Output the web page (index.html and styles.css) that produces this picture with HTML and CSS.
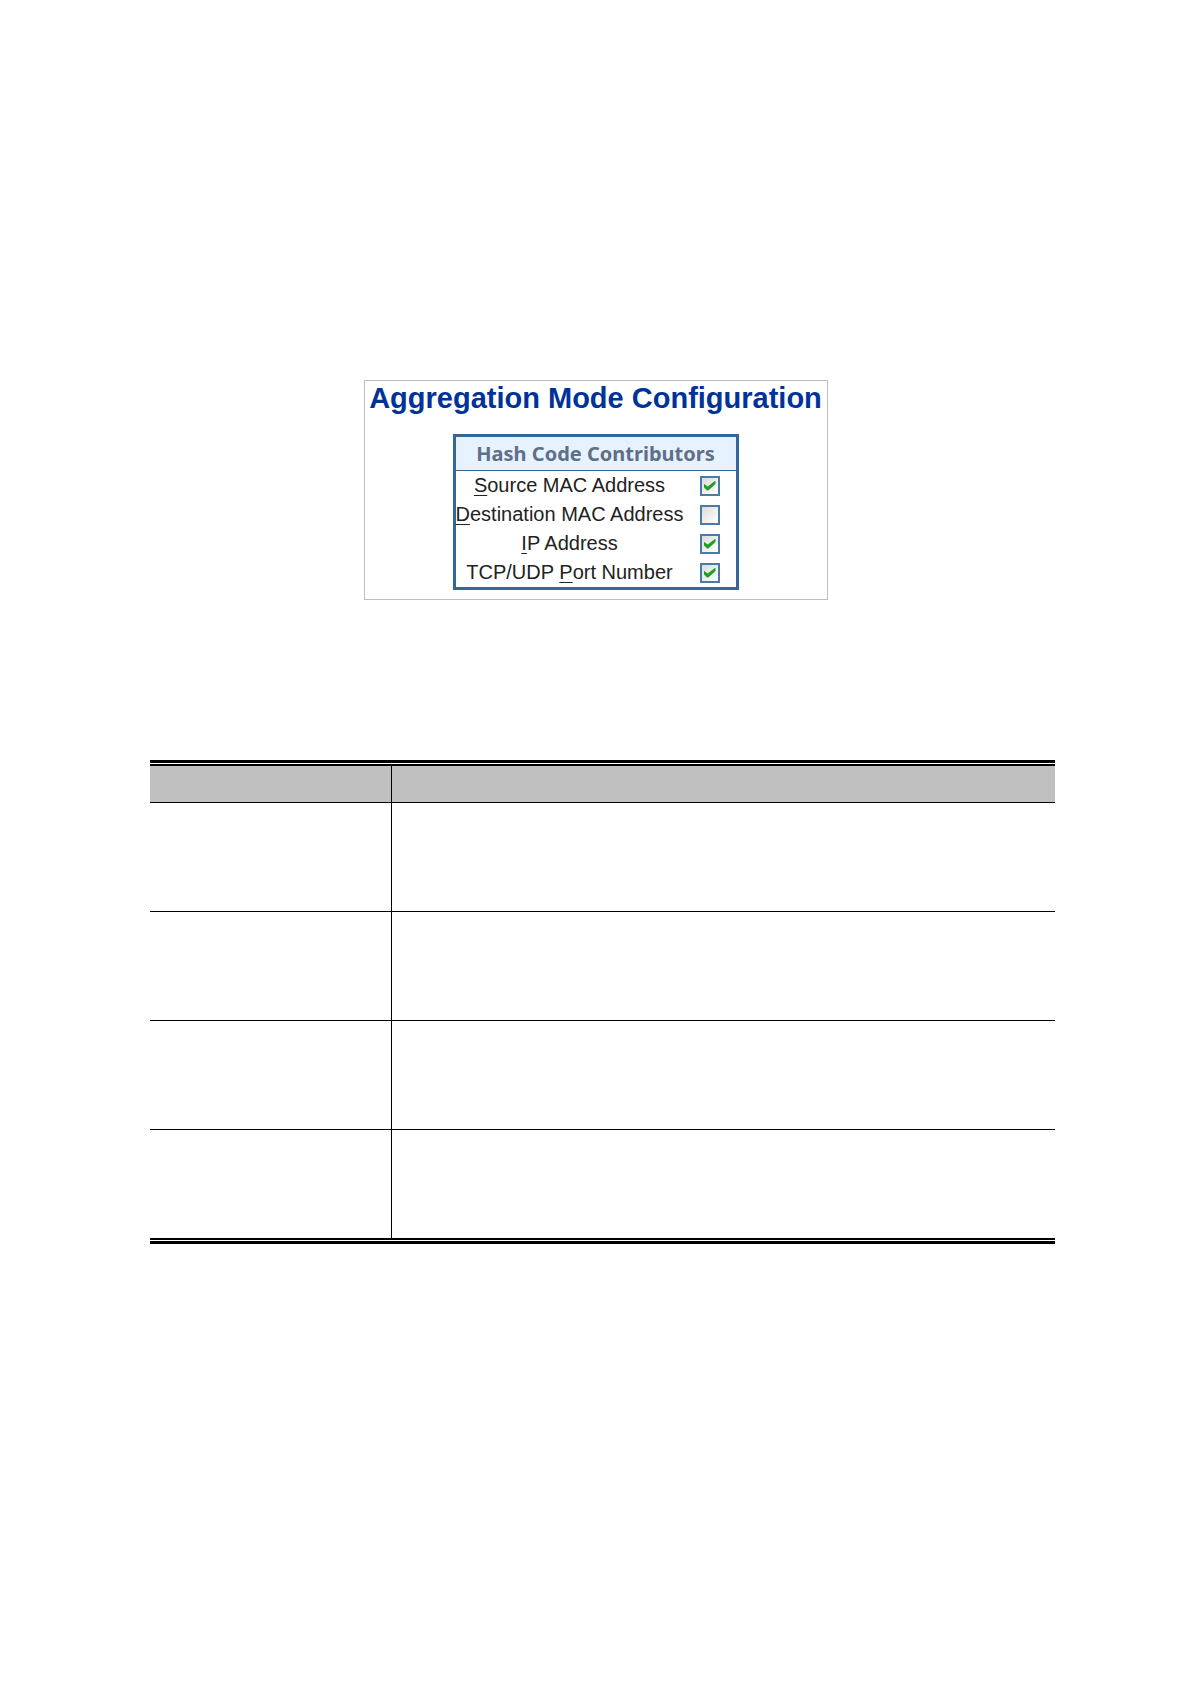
FILE: index.html
```
<!DOCTYPE html>
<html lang="en">
<head>
    <meta charset="UTF-8">
    <meta name="viewport" content="width=device-width, initial-scale=1.0">
    <title>Aggregation Mode Configuration</title>
    <link rel="stylesheet" href="styles.css">
</head>
<body>
    <form class="panel">
        <h1>Aggregation Mode Configuration</h1>
        <table class="hash">
            <thead>
                <tr><th colspan="2">Hash Code Contributors</th></tr>
            </thead>
            <tbody>
                <tr>
                    <td><label for="smac"><u>S</u>ource MAC Address</label></td>
                    <td class="check"><input type="checkbox" id="smac" checked></td>
                </tr>
                <tr>
                    <td><label for="dmac"><u>D</u>estination MAC Address</label></td>
                    <td class="check"><input type="checkbox" id="dmac"></td>
                </tr>
                <tr>
                    <td><label for="ip"><u>I</u>P Address</label></td>
                    <td class="check"><input type="checkbox" id="ip" checked></td>
                </tr>
                <tr>
                    <td><label for="port">TCP/UDP <u>P</u>ort Number</label></td>
                    <td class="check"><input type="checkbox" id="port" checked></td>
                </tr>
            </tbody>
        </table>
    </form>

    <div class="description">
        <table>
            <thead>
                <tr><th class="object"></th><th></th></tr>
            </thead>
            <tbody>
                <tr><td></td><td></td></tr>
                <tr><td></td><td></td></tr>
                <tr><td></td><td></td></tr>
                <tr><td></td><td></td></tr>
            </tbody>
        </table>
    </div>
</body>
</html>
```
FILE: styles.css
```
* {
    box-sizing: border-box;
}
body {
    margin: 0;
    padding: 380px 0 80px;
    background-color: #fff;
    font-family: "Liberation Sans", Arial, sans-serif;
}
.panel {
    width: 464px;
    max-width: 100%;
    margin: 0 auto;
    padding-bottom: 9px;
    border: 1px solid #bfbfbf;
}
h1 {
    margin: 0 0 18px;
    font-size: 29px;
    line-height: 35px;
    text-align: center;
    white-space: nowrap;
    color: #003399;
}
.hash {
    width: 286px;
    margin: 0 auto;
    border: 3px solid #336699;
    border-spacing: 0;
    font-size: 20px;
    line-height: 29px;
    text-align: center;
    white-space: nowrap;
    color: #222;
}
.hash th {
    height: 34px;
    padding: 0;
    border-bottom: 1px solid #336699;
    background-color: #e6f2ff;
    font-family: "Noto Sans", Tahoma, sans-serif;
    font-size: 20px;
    color: #5f6f86;
}
.hash td {
    height: 29px;
    padding: 0;
}
.hash .check {
    width: 52px;
    line-height: 0;
}
u {
    text-decoration-thickness: 1px;
    text-underline-offset: 3px;
}
input {
    appearance: none;
    width: 20px;
    height: 20px;
    margin: 0;
    padding: 3px 2px;
    border: 2px solid #4a7ba6;
    background: linear-gradient(135deg, #dcdcd7, #fff);
    vertical-align: middle;
}
/* green tick */
input:checked::before {
    content: "";
    display: block;
    width: 12px;
    height: 10px;
    background-color: #21a121;
    clip-path: polygon(0 30%, 35% 60%, 100% 0, 100% 35%, 40% 100%, 30% 100%, 0 65%);
}

/* double rule above and below the table */
.description {
    margin: 160px 136px 0 150px;
    padding: 1px 0;
    border: solid #000;
    border-width: 3px 0;
}
.description table {
    width: 100%;
    border-top: 2px solid #000;
    border-bottom: 1px solid #000;
    border-spacing: 0;
    table-layout: fixed;
}
.description th,
.description td {
    padding: 0;
    border-bottom: 1px solid #000;
}
.description th {
    height: 37px;
    background-color: #c0c0c0;
}
.description td {
    height: 109px;
}
.description .object {
    width: 242px;
}
.description th:first-child,
.description td:first-child {
    border-right: 1px solid #000;
}
```
